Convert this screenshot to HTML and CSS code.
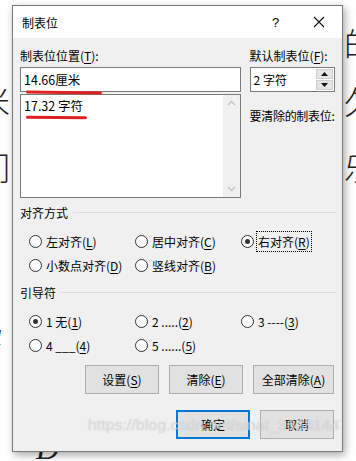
FILE: index.html
```html
<!DOCTYPE html>
<html lang="zh-CN">
<head>
    <meta charset="UTF-8">
    <meta name="viewport" content="width=device-width, initial-scale=1.0">
    <title>制表位</title>
    <link rel="stylesheet" href="styles.css">
</head>
<body>
    <!-- document behind the dialog -->
    <div class="doc">
        <div class="doc-line l1"><span>?</span><span>的</span></div>
        <div class="doc-line l2"><span>米</span><span>久</span></div>
        <div class="doc-line l3"><span>们</span><span>乐</span></div>
        <div class="doc-line l4"><span class="it">u</span><span></span></div>
        <div class="doc-line l5"><span>’</span><span></span></div>
        <div class="doc-line l6"><span class="it">D</span><span></span></div>
    </div>

    <div class="dialog">
        <div class="titlebar">
            <span class="title">制表位</span>
            <span class="help">?</span>
            <svg class="close" width="12" height="12" viewBox="0 0 12 12">
                <path d="M1 1 L11 11 M11 1 L1 11" stroke="#111" stroke-width="1.1"/>
            </svg>
        </div>

        <div class="body">
            <div class="top">
                <div class="col-left">
                    <div class="label">制表位位置(<u>T</u>):</div>
                    <div class="textbox">
                        <span class="mark">14.66厘米</span>
                    </div>
                    <div class="listbox">
                        <div class="list-items">
                            <span class="mark short">17.32 字符</span>
                        </div>
                        <div class="scrollbar">
                            <svg width="9" height="6" viewBox="0 0 9 6"><path d="M1 5 L4.5 1.5 L8 5" fill="none" stroke="#c2c2c2" stroke-width="1.3"/></svg>
                            <svg width="9" height="6" viewBox="0 0 9 6"><path d="M1 1 L4.5 4.5 L8 1" fill="none" stroke="#c2c2c2" stroke-width="1.3"/></svg>
                        </div>
                    </div>
                </div>
                <div class="col-right">
                    <div class="label">默认制表位(<u>F</u>):</div>
                    <div class="spinbox">
                        <span class="spin-value">2 字符</span>
                        <div class="spin-btns">
                            <div class="spin-btn"><svg width="7" height="4" viewBox="0 0 7 4"><path d="M0 4 L3.5 0 L7 4 Z" fill="#111"/></svg></div>
                            <div class="spin-btn"><svg width="7" height="4" viewBox="0 0 7 4"><path d="M0 0 L3.5 4 L7 0 Z" fill="#111"/></svg></div>
                        </div>
                    </div>
                    <div class="label clear-label">要清除的制表位:</div>
                </div>
            </div>

            <div class="group first">
                <div class="group-head"><span>对齐方式</span><div class="rule"></div></div>
                <div class="radio-grid">
                    <label class="radio"><span class="dot"></span><span>左对齐(<u>L</u>)</span></label>
                    <label class="radio"><span class="dot"></span><span>居中对齐(<u>C</u>)</span></label>
                    <label class="radio"><span class="dot on"></span><span class="focus">右对齐(<u>R</u>)</span></label>
                    <label class="radio"><span class="dot"></span><span>小数点对齐(<u>D</u>)</span></label>
                    <label class="radio"><span class="dot"></span><span>竖线对齐(<u>B</u>)</span></label>
                </div>
            </div>

            <div class="group second">
                <div class="group-head"><span>引导符</span><div class="rule"></div></div>
                <div class="radio-grid">
                    <label class="radio"><span class="dot on"></span><span>1 无(<u>1</u>)</span></label>
                    <label class="radio"><span class="dot"></span><span>2 .....(<u>2</u>)</span></label>
                    <label class="radio"><span class="dot"></span><span>3 ----(<u>3</u>)</span></label>
                    <label class="radio"><span class="dot"></span><span>4 ___(<u>4</u>)</span></label>
                    <label class="radio"><span class="dot"></span><span>5 ......(<u>5</u>)</span></label>
                </div>
            </div>

            <div class="btn-row">
                <button class="btn">设置(<u>S</u>)</button>
                <button class="btn">清除(<u>E</u>)</button>
                <button class="btn wide">全部清除(<u>A</u>)</button>
            </div>

            <div class="btn-row footer">
                <button class="btn default">确定</button>
                <button class="btn">取消</button>
            </div>
        </div>

        <div class="watermark">https://blog.csdn.net/sinat_36681447</div>
    </div>
</body>
</html>
```

FILE: styles.css
```css
body {
    margin: 0;
    width: 356px;
    height: 461px;
    overflow: hidden;
    position: relative;
    background-color: #fff;
    font-family: "Noto Sans CJK SC", "Noto Sans", sans-serif;
    font-size: 12px;
    color: #000;
}
u {
    text-decoration-thickness: 1px;
    text-underline-offset: 2px;
}

/* document text behind the dialog */
.doc {
    font-family: "Noto Sans CJK SC", "Liberation Serif", serif;
    font-weight: 300;
    font-size: 32px;
    color: #222;
    overflow: hidden;
    height: 461px;
}
.doc-line {
    display: flex;
    justify-content: space-between;
    margin: 0 -20px 0 -22px;
    height: 32px;
    line-height: 32px;
}
.doc-line .it {
    font-family: "Liberation Serif", serif;
    font-style: italic;
}
.l1 { margin-top: 26px; }
.l2 { margin-top: 26px; }
.l3 { margin-top: 34px; }
.l4 { margin-top: 136px; margin-left: -14px; }
.l5 { margin-top: 40px; margin-left: -12px; }
.l6 { margin-top: 10px; margin-left: 36px; }

/* dialog */
.dialog {
    position: absolute;
    left: 12px;
    top: 5px;
    width: 329px;
    height: 445px;
    border: 1px solid #7a7a7a;
    background-color: #f0f0f0;
    box-shadow: 2px 3px 8px rgba(0, 0, 0, 0.35);
    overflow: hidden;
}
.titlebar {
    height: 32px;
    background-color: #fff;
    display: flex;
    align-items: center;
    padding: 0 0 0 9px;
}
.title {
    flex: 1;
    font-size: 12px;
}
.help {
    width: 20px;
    font-family: "Liberation Sans", sans-serif;
    font-size: 13px;
    margin-right: 21px;
}
.close {
    margin-right: 17px;
}

.body {
    padding: 9px 7px 0 7px;
}
.label {
    height: 17px;
    line-height: 17px;
    white-space: nowrap;
}
.top {
    display: flex;
    gap: 9px;
}
.col-left {
    width: 222px;
}
.col-right {
    width: 86px;
}
.textbox {
    margin-top: 3px;
    height: 23px;
    border: 1px solid #7a7a7a;
    background-color: #fff;
    display: flex;
    align-items: center;
    padding-left: 3px;
}
.mark {
    position: relative;
    font-size: 12.5px;
}
.mark::after {
    content: "";
    position: absolute;
    left: 2px;
    right: -22px;
    bottom: -5px;
    height: 3px;
    border-radius: 2px;
    background-color: #e02020;
    transform: rotate(0.6deg);
}
.mark.short::after {
    right: -4px;
    bottom: -4px;
}
.listbox {
    margin-top: 2px;
    height: 102px;
    border: 1px solid #7a7a7a;
    background-color: #fff;
    display: flex;
}
.list-items {
    flex: 1;
    padding: 2px 0 0 3px;
    line-height: 17px;
}
.scrollbar {
    width: 17px;
    background-color: #f0f0f0;
    display: flex;
    flex-direction: column;
    justify-content: space-between;
    align-items: center;
    padding: 5px 0 5px;
}
.spinbox {
    margin-top: 3px;
    height: 23px;
    border: 1px solid #7a7a7a;
    background-color: #fff;
    display: flex;
    align-items: center;
}
.spin-value {
    flex: 1;
    padding-left: 3px;
}
.spin-btns {
    display: flex;
    flex-direction: column;
    gap: 1px;
    padding: 1px 1px 1px 0;
    height: 21px;
}
.spin-btn {
    width: 15px;
    flex: 1;
    background-color: #e5e5e5;
    border: 1px solid #cfcfcf;
    display: flex;
    align-items: center;
    justify-content: center;
}
.clear-label {
    margin-top: 15px;
    letter-spacing: -0.3px;
}

/* option groups */
.group.first {
    margin-top: 6px;
}
.group.second {
    margin-top: 7px;
}
.group-head {
    display: flex;
    align-items: center;
    gap: 5px;
    height: 17px;
    line-height: 17px;
}
.rule {
    flex: 1;
    height: 1px;
    background-color: #dcdcdc;
    margin-right: -1px;
}
.radio-grid {
    display: grid;
    grid-template-columns: 106px 106px 100px;
    grid-auto-rows: 24px;
    padding: 8px 0 0 9px;
}
.radio {
    display: flex;
    align-items: center;
    gap: 4px;
    white-space: nowrap;
}
.dot {
    width: 11px;
    height: 11px;
    border: 1px solid #333;
    border-radius: 50%;
    background-color: #fff;
    position: relative;
    flex: none;
}
.dot.on::after {
    content: "";
    position: absolute;
    left: 3px;
    top: 3px;
    width: 5px;
    height: 5px;
    border-radius: 50%;
    background-color: #333;
}
.focus {
    outline: 1px dotted #000;
    outline-offset: 0;
    padding: 1px 1px;
    margin-left: -1px;
}

/* buttons */
.btn-row {
    display: flex;
    justify-content: flex-end;
    gap: 10px;
    margin-top: 8px;
    padding-right: 1px;
}
.btn {
    width: 74px;
    height: 29px;
    background-color: #e1e1e1;
    border: 1px solid #adadad;
    font-family: inherit;
    font-size: 12px;
    color: #000;
    padding: 0;
}
.btn.wide {
    width: 81px;
}
.btn-row.footer {
    margin-top: 16px;
}
.btn.default {
    border: 2px solid #0078d7;
}

.watermark {
    position: absolute;
    left: 75px;
    top: 410px;
    font-family: "Liberation Sans", sans-serif;
    font-size: 15.5px;
    color: rgba(255, 255, 255, 0.55);
    text-shadow: 0 0 1px rgba(120, 120, 120, 0.5);
    white-space: nowrap;
    letter-spacing: 0.2px;
}
```
